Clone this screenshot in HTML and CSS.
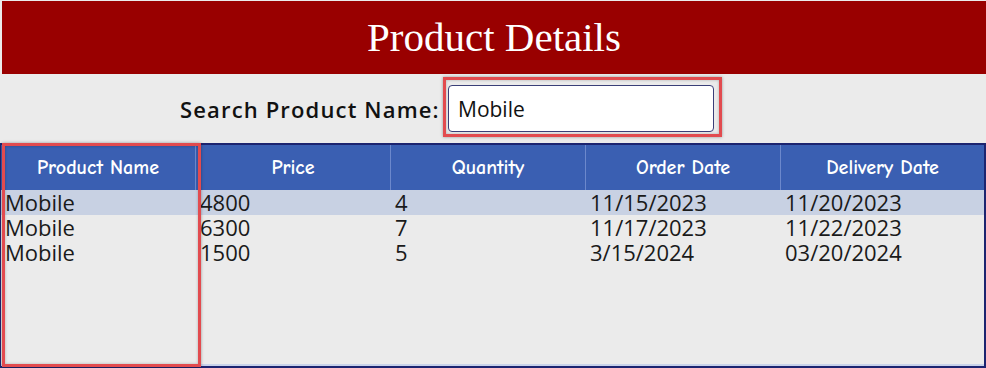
FILE: index.html
```html
<!DOCTYPE html>
<html>
<head>
<meta charset="utf-8">
<link rel="stylesheet" href="styles.css">
</head>
<body>
<div class="page">
  <div class="header"><h1 class="title">Product Details</h1></div>
  <div class="search">
    <label class="search-label">Search Product Name:</label>
    <div class="search-input">Mobile</div>
  </div>
  <div class="table">
    <div class="th">Product Name</div>
    <div class="th">Price</div>
    <div class="th">Quantity</div>
    <div class="th">Order Date</div>
    <div class="th last">Delivery Date</div>

    <div class="td sel">Mobile</div>
    <div class="td sel">4800</div>
    <div class="td sel">4</div>
    <div class="td sel">11/15/2023</div>
    <div class="td sel">11/20/2023</div>

    <div class="td">Mobile</div>
    <div class="td">6300</div>
    <div class="td">7</div>
    <div class="td">11/17/2023</div>
    <div class="td">11/22/2023</div>

    <div class="td">Mobile</div>
    <div class="td">1500</div>
    <div class="td">5</div>
    <div class="td">3/15/2024</div>
    <div class="td">03/20/2024</div>
  </div>
  <div class="highlight hl-search"></div>
  <div class="highlight hl-column"></div>
</div>
</body>
</html>
```
FILE: styles.css
```css
html, body {
  margin: 0;
  padding: 0;
  background: #ebebeb;
}
.page {
  position: relative;
  width: 986px;
  height: 368px;
  overflow: hidden;
  background: #ebebeb;
}
.header {
  margin: 1px 0 0 2px;
  height: 73px;
  background: #990000;
  display: flex;
  justify-content: center;
}
.title {
  margin: 0;
  padding-top: 14px;
  font-family: "Liberation Serif", "DejaVu Serif", serif;
  font-weight: normal;
  font-size: 41px;
  line-height: 44px;
  color: #fff;
}
.search {
  height: 69px;
  display: flex;
  align-items: center;
}
.search-label {
  box-sizing: border-box;
  width: 448px;
  padding-left: 180px;
  font-family: "Open Sans", "Noto Sans", sans-serif;
  font-weight: 600;
  font-size: 22px;
  letter-spacing: 1.15px;
  color: #111;
  white-space: nowrap;
}
.search-input {
  box-sizing: border-box;
  width: 266px;
  height: 47px;
  background: #fff;
  border: 1px solid #3a3f78;
  border-radius: 4px;
  padding-left: 9px;
  display: flex;
  align-items: center;
  font-family: "Open Sans", "Noto Sans", sans-serif;
  font-size: 21px;
  color: #111;
}
.table {
  box-sizing: border-box;
  height: 225px;
  border: 2px solid #1c2470;
  border-left-width: 1px;
  display: grid;
  grid-template-columns: 195px 195px 195px 195px 1fr;
  grid-template-rows: 45px repeat(3, 25px) 1fr;
  align-content: start;
  background: #ebebeb;
  box-shadow: inset 0 -2px 0 #c9d3ea;
}
.th {
  background: #3a5fb2;
  color: #fff;
  font-family: "Comic Sans MS", "Comic Neue", "Noto Sans", sans-serif;
  font-weight: 600;
  font-size: 20px;
  display: flex;
  align-items: center;
  justify-content: center;
  border-right: 1px solid #6c88cc;
}
.th.last {
  border-right: none;
}
.td {
  font-family: "Open Sans", "Noto Sans", sans-serif;
  font-size: 22px;
  line-height: 25px;
  color: #1a1a1a;
  padding-left: 4px;
  white-space: nowrap;
}
.td.sel {
  background: #c8d1e3;
}
.highlight {
  position: absolute;
  box-sizing: border-box;
  border: 3px solid #e24b4f;
  box-shadow: 0 0 3px rgba(0,0,0,0.35), inset 0 0 3px rgba(0,0,0,0.25);
  pointer-events: none;
}
.hl-search {
  left: 443px;
  top: 77px;
  width: 279px;
  height: 60px;
}
.hl-column {
  left: 2px;
  top: 143px;
  width: 199px;
  height: 224px;
}
```
